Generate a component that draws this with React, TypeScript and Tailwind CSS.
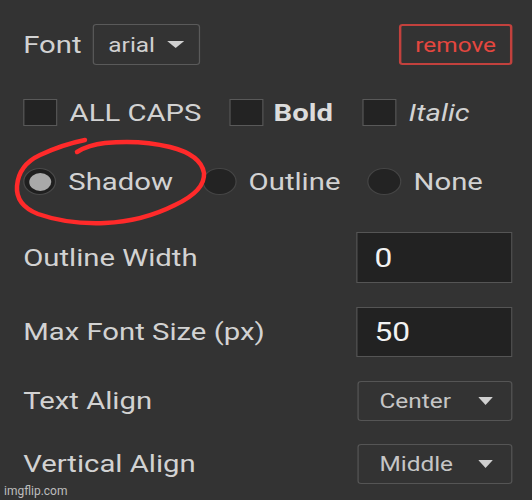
import React from "react";

function Caret({ w, h, color }: { w: number; h: number; color: string }) {
  return (
    <svg width={w} height={h} viewBox="0 0 12 7" preserveAspectRatio="none" className="shrink-0">
      <polygon points="0,0 12,0 6,7" fill={color} />
    </svg>
  );
}

function Check({ label, extra, gap }: { label: string; extra?: string; gap: string }) {
  return (
    <div className={"flex items-center " + gap}>
      <div className="w-[28px] h-[27px] bg-[#232323] border border-[#595959]" />
      <span className={"text-[24px] text-[#d2d2d2] leading-none " + (extra ?? "")}>{label}</span>
    </div>
  );
}

function Radio({ label, selected }: { label: string; selected?: boolean }) {
  return (
    <div className="flex items-center gap-[10px]">
      {selected ? (
        <div className="w-[27px] h-[27px] rounded-full bg-[#1f1f1f] border border-[#4a4a4a] flex items-center justify-center">
          <div className="w-[18px] h-[18px] rounded-full bg-[#a9a9a9]" />
        </div>
      ) : (
        <div className="w-[28px] h-[27px] rounded-full bg-[#232323] border border-[#454545]" />
      )}
      <span className="text-[24px] text-[#d2d2d2] leading-none">{label}</span>
    </div>
  );
}

export default function App() {
  return (
    <div className="relative w-[532px] h-[500px] bg-[#333333] overflow-hidden font-['Roboto',sans-serif]">
      <div className="w-[436px] origin-top-left scale-x-[1.22] pl-[19px] pr-[16px] pt-[24px] flex flex-col">
        {/* Row 1 */}
        <div className="flex items-center h-[41px]">
          <span className="text-[24px] text-[#d2d2d2] leading-none">Font</span>
          <div className="ml-[9px] h-[41px] inline-flex items-center gap-[10px] pl-[12px] pr-[12px] border border-[#5a5a5a] rounded-[3px]">
            <span className="text-[20px] text-[#d0d0d0] leading-none">arial</span>
            <Caret w={14} h={7} color="#d0d0d0" />
          </div>
          <div className="ml-auto w-[93px] h-[41px] flex items-center justify-center border-2 border-[#c2413d] rounded-[3px]">
            <span className="text-[20px] text-[#e5473f] leading-none">remove</span>
          </div>
        </div>

        {/* Row 2 */}
        <div className="mt-[34px] h-[27px] flex items-center">
          <Check label="ALL CAPS" gap="gap-[10px]" />
          <div className="ml-[23px]">
            <Check label="Bold" gap="gap-[8px]" extra="font-bold text-[#dcdcdc]" />
          </div>
          <div className="ml-[24px]">
            <Check label="Italic" gap="gap-[10px]" extra="italic" />
          </div>
        </div>

        {/* Row 3 */}
        <div className="mt-[42px] h-[27px] flex items-center">
          <Radio label="Shadow" selected />
          <div className="ml-[24px]">
            <Radio label="Outline" />
          </div>
          <div className="ml-[22px]">
            <Radio label="None" />
          </div>
        </div>

        {/* Row 4 */}
        <div className="mt-[37px] h-[51px] flex items-center">
          <span className="text-[24px] text-[#d2d2d2] leading-none">Outline Width</span>
          <div className="ml-auto w-[128px] h-[51px] bg-[#222222] border border-[#555555] flex items-center pl-[14px]">
            <span className="text-[26px] text-[#f2f2f2] leading-none">0</span>
          </div>
        </div>

        {/* Row 5 */}
        <div className="mt-[24px] h-[50px] flex items-center">
          <span className="text-[24px] text-[#d2d2d2] leading-none">Max Font Size (px)</span>
          <div className="ml-auto w-[128px] h-[50px] bg-[#222222] border border-[#555555] flex items-center pl-[14px]">
            <span className="text-[26px] text-[#f2f2f2] leading-none">50</span>
          </div>
        </div>

        {/* Row 6 */}
        <div className="mt-[24px] h-[40px] flex items-center">
          <span className="text-[24px] text-[#d2d2d2] leading-none">Text Align</span>
          <div className="ml-auto w-[127px] h-[40px] border border-[#555555] rounded-[3px] flex items-center pl-[17px] pr-[15px]">
            <span className="text-[20px] text-[#c6c6c6] leading-none">Center</span>
            <div className="ml-auto">
              <Caret w={12} h={8} color="#d0d0d0" />
            </div>
          </div>
        </div>

        {/* Row 7 */}
        <div className="mt-[23px] h-[40px] flex items-center">
          <span className="text-[24px] text-[#d2d2d2] leading-none">Vertical Align</span>
          <div className="ml-auto w-[127px] h-[40px] border border-[#555555] rounded-[3px] flex items-center pl-[17px] pr-[15px]">
            <span className="text-[20px] text-[#c6c6c6] leading-none">Middle</span>
            <div className="ml-auto">
              <Caret w={12} h={8} color="#d0d0d0" />
            </div>
          </div>
        </div>
      </div>

      {/* Red hand-drawn circle */}
      <svg
        className="absolute left-0 top-0 pointer-events-none"
        width="532"
        height="500"
        viewBox="0 0 532 500"
      >
        <path
          d="M85,140 C70,143 55,148 40,155 C25,162 18,173 17,186 C16,199 23,208 38,214 C55,220 80,224 105,223 C130,222 155,215 175,205 C192,197 205,186 204,173 C202,161 190,152 170,147 C150,142 125,141 105,143 C95,144 85,147 77,152"
          fill="none"
          stroke="#ff2a2a"
          strokeWidth="4.5"
          strokeLinecap="round"
          strokeLinejoin="round"
        />
      </svg>

      {/* Watermark */}
      <span className="absolute left-[4px] bottom-[3px] text-[12px] leading-none text-[#bdbdbd] font-['Roboto',sans-serif]">
        imgflip.com
      </span>
    </div>
  );
}
